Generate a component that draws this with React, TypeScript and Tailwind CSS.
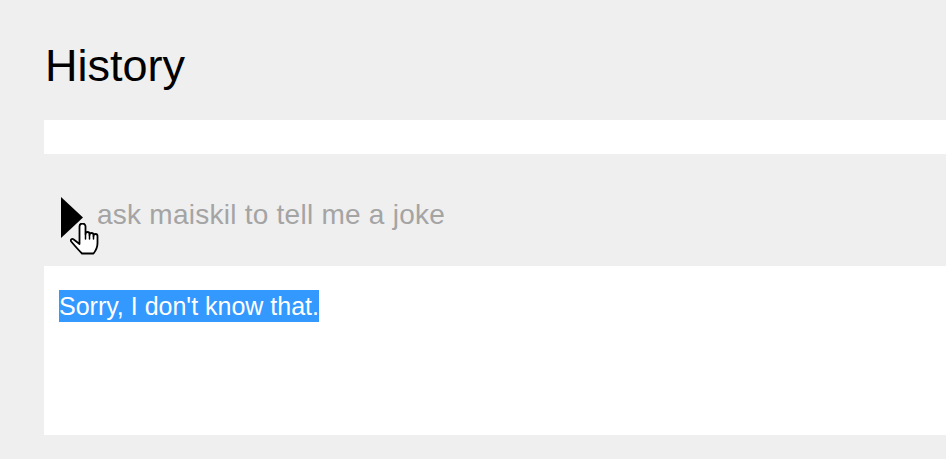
import React from "react";

function HandCursor() {
  return (
    <svg width="29" height="32" viewBox="0 0 29 32" className="absolute left-[26px] top-[69px]">
      <path
        d="M9.5 3.5 A3 3 0 0 1 15.5 3.5 V11 A2 2 0 0 1 19.5 11 V12 A2 2 0 0 1 23.5 12 V13 A2 2 0 0 1 27.5 13 V20 C27.5 25 25.5 28 23.5 30.5 H12 C9 27.5 5 23 1.2 18.5 C0.2 17 1.7 15 3.7 16.5 L9.5 21 Z"
        fill="white"
        stroke="black"
        strokeWidth="1.8"
        strokeLinejoin="round"
      />
      <path d="M15.5 11 V16 M19.5 12 V16 M23.5 13 V16" stroke="black" strokeWidth="1.5" strokeLinecap="round" />
    </svg>
  );
}

export default function App() {
  return (
    <div className="w-[946px] h-[459px] bg-[#efefef] overflow-hidden" style={{ fontFamily: '"Liberation Sans", Arial, sans-serif' }}>
      <div className="pt-[41px] pl-[45px]">
        <h1 className="text-[45px] leading-[50px] text-black font-normal">History</h1>
      </div>
      <div className="ml-[44px] mt-[29px]">
        <div className="h-[34px] bg-white" />
        <div className="relative h-[112px] bg-[#efefef] flex items-start pl-[17px] pt-[43px]">
          <svg width="22" height="41" viewBox="0 0 22 41" className="shrink-0">
            <polygon points="0,0 22,20.5 0,41" fill="black" />
          </svg>
          <span className="ml-[14px] mt-[3px] text-[28px] tracking-[0.25px] text-[#a4a4a4] leading-[30px]">ask maiskil to tell me a joke</span>
          <HandCursor />
        </div>
        <div className="h-[169px] bg-white pl-[15px] pt-[24px]">
          <span className="inline-block bg-[#3399ff] text-white text-[25px] leading-[32px]">Sorry, I don't know that.</span>
        </div>
      </div>
    </div>
  );
}
